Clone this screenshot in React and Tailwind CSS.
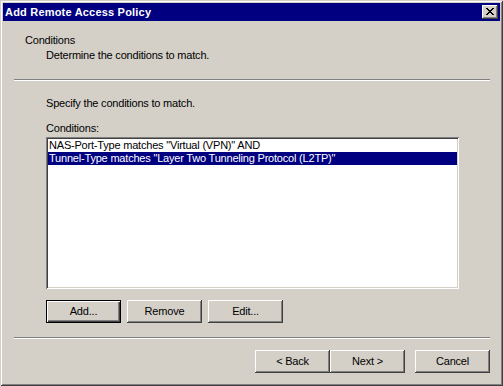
import React from 'react';

const raised =
  'shadow-[inset_-1px_-1px_#404040,inset_1px_1px_#ffffff,inset_-2px_-2px_#808080,inset_2px_2px_#d4d0c8]';

const CloseGlyph = () => {
  // classic 8x7 close cross, pixel by pixel
  const rows = ['XX....XX', '.XX..XX.', '..XXXX..', '...XX...', '..XXXX..', '.XX..XX.', 'XX....XX'];
  return (
    <svg width="8" height="7" viewBox="0 0 8 7" shapeRendering="crispEdges">
      {rows.map((r, y) =>
        r.split('').map((c, x) => (c === 'X' ? <rect key={`${x}-${y}`} x={x} y={y} width="1" height="1" fill="#000" /> : null))
      )}
    </svg>
  );
};

const Button = ({ children, primary, className = '' }) => (
  <button
    className={
      primary
        ? `w-[75px] h-[23px] bg-[#d4d0c8] border border-black shadow-[inset_1px_1px_#ffffff,inset_-1px_-1px_#404040,inset_-2px_-2px_#808080] text-black ${className}`
        : `w-[75px] h-[23px] bg-[#d4d0c8] ${raised} text-black ${className}`
    }
  >
    {children}
  </button>
);

const Separator = () => <div className="ml-[11px] mr-[10px] h-[2px] border-t border-t-[#808080] border-b border-b-white" />;

export default function App() {
  return (
    <div className="w-[503px] h-[386px] bg-[#d4d0c8] p-[3px] flex flex-col text-[11px] leading-[13px] tracking-[-0.2px] text-black font-['Liberation_Sans',Arial,sans-serif] shadow-[inset_1px_1px_#d4d0c8,inset_-1px_-1px_#404040,inset_2px_2px_#ffffff,inset_-2px_-2px_#808080]">
      <div className="h-[18px] shrink-0 bg-[#000080] flex items-center justify-between pl-[2px] pr-[2px]">
        <span className="text-white font-bold tracking-[0.2px] leading-[18px]">Add Remote Access Policy</span>
        <button className={`w-[16px] h-[14px] bg-[#d4d0c8] ${raised} flex items-start justify-start pl-[4px] pt-[3px]`}>
          <CloseGlyph />
        </button>
      </div>

      <div className="mt-[13px] pl-[22px]">Conditions</div>
      <div className="mt-[2px] pl-[43px]">Determine the conditions to match.</div>

      <div className="mt-[17px]">
        <Separator />
      </div>

      <div className="mt-[16px] pl-[43px]">Specify the conditions to match.</div>
      <div className="mt-[12px] pl-[43px]">Conditions:</div>

      <div className="mt-[2px] ml-[43px] w-[413px] h-[152px] bg-white p-[2px] shadow-[inset_1px_1px_#808080,inset_-1px_-1px_#ffffff,inset_2px_2px_#404040,inset_-2px_-2px_#d4d0c8]">
        <div className="h-[13px] pl-[1px] whitespace-nowrap">NAS-Port-Type matches "Virtual (VPN)" AND</div>
        <div className="h-[13px] pl-[1px] whitespace-nowrap bg-[#000080] text-white">
          Tunnel-Type matches "Layer Two Tunneling Protocol (L2TP)"
        </div>
      </div>

      <div className="mt-[11px] ml-[43px] flex gap-[6px]">
        <Button primary>Add...</Button>
        <Button>Remove</Button>
        <Button>Edit...</Button>
      </div>

      <div className="mt-[14px]">
        <Separator />
      </div>

      <div className="mt-[11px] mr-[10px] flex justify-end">
        <Button>&lt; Back</Button>
        <Button className="ml-0">Next &gt;</Button>
        <Button className="ml-[10px]">Cancel</Button>
      </div>
    </div>
  );
}
